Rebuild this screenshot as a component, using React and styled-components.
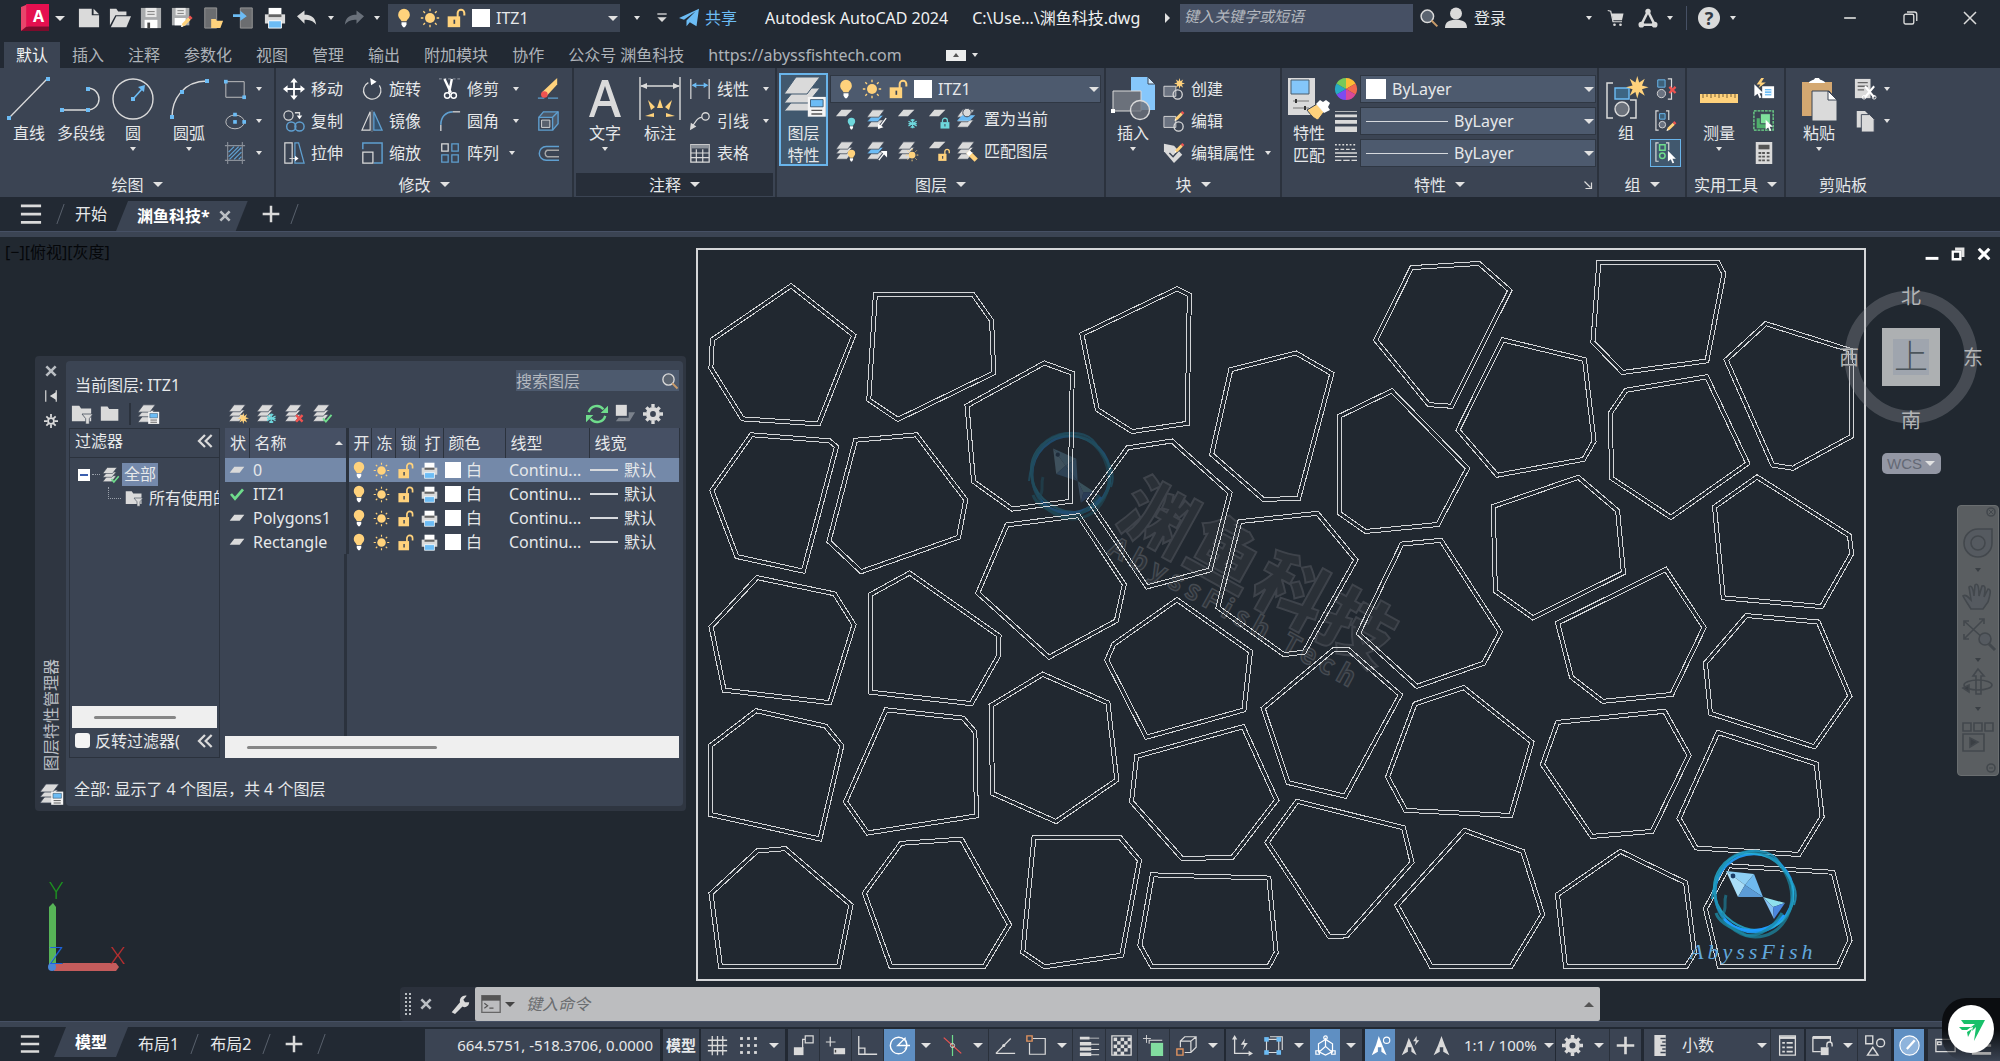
import { useState } from 'react';
import styled, { createGlobalStyle, css } from 'styled-components';

const GlobalStyle = createGlobalStyle`
  * {
    box-sizing: border-box;
  }
  body {
    margin: 0;
    background: #222933;
    color: #e6e8ea;
    font-family: "Noto Sans", "Noto Sans CJK SC", sans-serif;
    font-size: 16px;
    line-height: 24px;
    overflow: hidden;
  }
  button, input, select {
    font: inherit;
    color: inherit;
    border: 0;
    margin: 0;
    padding: 0;
    background: none;
  }
  button {
    cursor: pointer;
  }
  svg {
    display: block;
    flex: none;
    overflow: visible;
  }
`

const L = '#dadada';
const B = '#6cbcf5';
const S = '#5f9fd0';
const Y = '#ffd27c';
const G = '#6fdc8c';
const C = '#6ed7dc';
const R = '#ef5350';
const P = '#3b4453';

/* ---------- icons ---------- */

const Sheets = ({ under = L }) => (
  <g stroke={P} strokeWidth="0.8">
    <path d="M7 13h12l-6 8H1z" fill={L} />
    <path d="M7 8h12l-6 7H1z" fill={under} />
    <path d="M7 2h13l-6 8H1z" fill={L} />
  </g>
)
const Sheet = () => <path d="M7 2h12l-7 7H1z" fill={L} />
const BulbShape = ({ fill = Y }) => (
  <g>
    <path d="M12 1a7 7 0 0 1 7 7c0 4-3 5-4 8H9c-1-3-4-4-4-8a7 7 0 0 1 7-7z" fill={fill} />
    <path d="M9 17h6v3l-2 3h-2l-2-3z" fill="#fff" />
  </g>
)
const SunShape = () => (
  <g>
    <circle cx="12" cy="12" r="6" fill={Y} />
    <path d="M12 1v3M12 20v3M1 12h3M20 12h3M4 4l2 2M18 18l2 2M20 4l-2 2M4 20l2-2" stroke={Y} strokeWidth="1.6" />
  </g>
)
const LockShape = ({ fill = Y }) => (
  <g>
    <path d="M14 11V6a4 4 0 0 1 8 0v3" fill="none" stroke={fill} strokeWidth="2.4" />
    <path d="M2 10h15v13H2z" fill={fill} />
    <path d="M9 14h2v5H9z" fill={P} />
  </g>
)
const ShutLock = () => (
  <g>
    <path d="M7 11V7a5 5 0 0 1 10 0v4" fill="none" stroke={C} strokeWidth="2.6" />
    <path d="M3 10h18v13H3z" fill={C} />
    <path d="M11 14h2v5h-2z" fill={P} />
  </g>
)
const Flake = () => <path d="M12 2v20M3 7l18 10M21 7L3 17M8 3l4 4 4-4M8 21l4-4 4 4M3 12h18" fill="none" stroke={C} strokeWidth="2.6" />
const Pencil = () => (
  <g>
    <path d="M3 21l2-6L15 5l4 4L9 19z" fill={Y} />
    <path d="M15 5l3-3 4 4-3 3z" fill={R} />
    <path d="M3 21l1-4 3 3z" fill="#fff" />
  </g>
)
const Burst = () => <path d="M12 0l2 7 6-4-3 7 7 2-7 2 3 7-6-4-2 7-2-7-6 4 3-7-7-2 7-2-3-7 6 4z" fill={Y} />
const Cursor = () => <path d="M5 1v19l5-4 3 7 3-1-3-7h6z" fill="#fff" />
const Cross = ({ c = R }) => <path d="M4 4l16 16M20 4L4 20" stroke={c} strokeWidth="6" />
const Tick = () => <path d="M3 12l6 7L21 5" fill="none" stroke={G} strokeWidth="4" />
const Card = () => (
  <g>
    <path d="M2 1h20v22H2z" fill="#f4f4f4" />
    <path d="M5 4h14v8H5z" fill={B} stroke="#3b5870" />
    <path d="M6 16h12M6 20h12" stroke="#555" strokeWidth="1.6" />
  </g>
)
const Mini = ({ x = 12, y = 12, s = 0.5, children }) => <g transform={`translate(${x} ${y}) scale(${s})`}>{children}</g>
const Folder = () => <path d="M1 3h8l2 3h11v14H1z" fill={L} />
const Dots = ({ pts, c = B, r = 2 }) => pts.map(([x, y]) => <rect key={`${x}-${y}`} x={x - r} y={y - r} width={r * 2} height={r * 2} fill={c} />)

const ICONS = {
  app: <><path d="M0 3l7-3v24l-7 2z" fill="#e8456b" /><path d="M5 0h22v22H5z" fill="#e51050" /><path d="M0 26l5-4h22v4z" fill="#7d0b2c" /></>,
  newDoc: <><path d="M1 2h14v7h8v13H1z" fill={L} /><path d="M17 2l6 6h-6z" fill={L} /></>,
  open: <><path d="M1 20V2h7l2 3h9v4H7z" fill={L} /><path d="M8 10h16l-5 12H2z" fill={L} /></>,
  save: <><path d="M1 1h22v22H1z" fill="#a9abad" /><path d="M6 1h12v10H6z" fill="#e8e8e8" /><path d="M8 5h8M8 8h8" stroke="#777" /><path d="M5 14h14v9H5z" fill="#fff" /><path d="M8 17h3v6H8z" fill="#444" /></>,
  saveAs: <><path d="M1 1h19v19H1z" fill="#a9abad" /><path d="M5 1h11v8H5z" fill="#e8e8e8" /><path d="M7 4h7M7 7h7" stroke="#777" /><path d="M4 12h12v8H4z" fill="#fff" /><Mini x={9} y={8} s={0.66}><Pencil /></Mini></>,
  phoneOpen: <><path d="M3 1h13v22H3z" fill="#6b6d70" stroke="#999" /><path d="M10 13h5l1 2h7l-3 8H10z" fill={Y} /></>,
  phoneSend: <><path d="M8 1h13v22H8z" fill="#6b6d70" stroke="#999" /><path d="M0 8h8V4l7 6-7 5v-4H0z" fill={B} /></>,
  print: <><path d="M5 1h14v8H5z" fill="#fff" /><path d="M1 8h22v10H1z" fill={L} /><path d="M5 8h14v3H5z" fill="#666" /><path d="M5 15h14v8H5z" fill={B} stroke="#fff" /></>,
  undo: <path d="M0 10l9-7v5c8 0 13 3 14 12-4-5-8-6-14-6v5z" fill={L} />,
  redo: <path d="M24 10l-9-7v5C7 8 2 11 1 20c4-5 8-6 14-6v5z" fill="#69707a" />,
  bulb: <BulbShape />,
  sun: <SunShape />,
  lock: <LockShape />,
  customize: <><path d="M5 6h14" stroke={L} strokeWidth="2" /><path d="M5 11h14l-7 7z" fill={L} /></>,
  plane: <><path d="M0 12L24 1l-3 21-8-5-4 5v-7L20 4 6 14z" fill={B} /></>,
  search: <><circle cx="10" cy="10" r="7.5" fill="#5b6470" stroke={L} strokeWidth="1.8" /><path d="M15 15l7 7" stroke="#c99b6a" strokeWidth="2.4" /></>,
  user: <><circle cx="12" cy="7" r="6.5" fill={L} /><path d="M0 23c0-7 5-9 12-9s12 2 12 9z" fill={L} /></>,
  cart: <><path d="M1 2l4 1 3 14h12" fill="none" stroke={L} strokeWidth="1.6" /><path d="M6 6h16l-2 9H8z" fill={L} /><circle cx="10" cy="21" r="1.8" fill={L} /><circle cx="18" cy="21" r="1.8" fill={L} /></>,
  tri: <><path d="M12 4L4 20h16z" fill="none" stroke={L} strokeWidth="3" /><circle cx="12" cy="4" r="3.2" fill={L} /><circle cx="4" cy="20" r="3.4" fill={L} /><circle cx="20" cy="20" r="3.4" fill={L} /></>,
  minimize: <path d="M5 12h14" stroke={L} strokeWidth="2" />,
  restore: <g fill="none" stroke={L} strokeWidth="1.8"><rect x="4" y="7" width="13" height="13" rx="2" /><path d="M8 4h10a3 3 0 0 1 3 3v9" /></g>,
  close: <path d="M4 4l16 16M20 4L4 20" stroke={L} strokeWidth="2" />,
  childMin: <path d="M1 17h22v5H1z" fill="#fff" />,
  childRestore: <><path d="M7 1h16v16h-5V6H7z" fill="#e4e4e4" /><path d="M3 8h13v13H3z" fill="none" stroke="#fff" strokeWidth="4" /></>,
  childClose: <path d="M3 3l18 18M21 3L3 21" stroke="#fff" strokeWidth="5.4" />,
  menu: <path d="M1 3h22M1 12h22M1 21h22" stroke={L} strokeWidth="3" />,
  plus: <path d="M12 2v20M2 12h20" stroke={L} strokeWidth="3" />,
  x: <path d="M4 4l16 16M20 4L4 20" stroke="#b9bdc2" strokeWidth="4.4" />,

  rect: <><path d="M2 4h20v17H2z" fill="none" stroke="#c8c8c8" /><Dots pts={[[2, 4], [22, 21]]} /></>,
  ellipse: <><ellipse cx="12" cy="13" rx="10" ry="7.5" fill="none" stroke="#c8c8c8" /><Dots pts={[[12, 5], [12, 13], [22, 13]]} /></>,
  hatch: <><path d="M1 4h22M1 20h22M4 0v24M20 0v24" stroke="#8a9099" strokeWidth="1.2" /><path d="M5 11l6-6M5 16L16 5M6 19L19 6M11 19l8-8M16 19l3-3" stroke={S} strokeWidth="1.4" /></>,
  move: <path d="M12 0l4 5h-3v6h6V8l5 4-5 4v-3h-6v6h3l-4 5-4-5h3v-6H5v3l-5-4 5-4v3h6V5H8z" fill="#fff" />,
  rotate: <><path d="M8 5a9.5 9.5 0 1 0 12 3" fill="none" stroke={L} strokeWidth="1.4" /><path d="M10 0l7 4-6 4z" fill="#fff" /></>,
  trim: <><path d="M0 1h24" stroke="#9aa2ac" strokeDasharray="3 2" /><path d="M6 1l7 15M14 1l-3 15" stroke="#fff" strokeWidth="2.6" /><circle cx="9" cy="19" r="3" fill="none" stroke="#fff" strokeWidth="1.6" /><circle cx="16" cy="19" r="3" fill="none" stroke="#fff" strokeWidth="1.6" /></>,
  erase: <><path d="M1 22h7M12 22h11" stroke={S} strokeWidth="1.4" /><path d="M22 0v7L11 19l-5-4z" fill={Y} /><circle cx="8" cy="18" r="3.6" fill={R} /></>,
  copy: <><circle cx="6" cy="6" r="5" fill="none" stroke={L} strokeWidth="1.3" /><g fill="none" stroke={S} strokeWidth="1.6"><circle cx="9" cy="18" r="5" /><circle cx="18" cy="18" r="5" /></g><path d="M13 3h5v3" fill="none" stroke={L} strokeWidth="1.4" /><path d="M15 6h6l-3 4z" fill="#fff" /></>,
  mirror: <><path d="M10 2v20H1z" fill="none" stroke={L} strokeWidth="1.2" /><path d="M14 2v20h9z" fill="#34536f" stroke={S} strokeWidth="1.4" /><path d="M12 0v24" stroke="#8b929b" strokeWidth="0.8" /></>,
  fillet: <><path d="M2 23V16" stroke={L} strokeWidth="1.4" /><path d="M2 16C2 8 7 2 15 2" fill="none" stroke={S} strokeWidth="1.8" /><path d="M15 2h8" stroke={L} strokeWidth="1.4" /></>,
  box3d: <><path d="M2 8l5-6h16v13l-6 7" fill="#4c5868" stroke={S} strokeWidth="1.5" /><path d="M2 8h15v14H2zM17 8l6-6" fill={P} stroke={S} strokeWidth="1.5" /><path d="M5 11h9v8H5z" fill="#59616d" stroke={L} /></>,
  stretch: <><path d="M2 1h8v22H2z" fill="none" stroke={L} strokeWidth="1.3" /><path d="M13 1h4l6 22H13z" fill="none" stroke={S} strokeWidth="1.4" /><path d="M7 18h8" stroke={L} /><path d="M13 15l4 3-4 3z" fill="#fff" /></>,
  scale: <><path d="M2 8V1h21v22h-9" fill="none" stroke={S} strokeWidth="1.6" /><path d="M2 11h11v12H2z" fill="none" stroke={L} strokeWidth="1.4" /></>,
  array: <g fill="none" strokeWidth="1.4"><path d="M3 2h7v8H3z" stroke={L} /><path d="M14 2h7v8h-7zM3 14h7v8H3zM14 14h7v8h-7z" stroke={S} /></g>,
  offset: <g fill="none" strokeWidth="1.6"><path d="M24 5H10a7 7 0 0 0 0 15h14" stroke={S} /><path d="M24 9H11a4 4 0 0 0 0 7h13" stroke="#a6a6a6" /></g>,
  linear: <><path d="M2 1v22M22 1v22" stroke={L} strokeWidth="1.3" /><path d="M4 8h16" stroke={B} strokeWidth="1.3" /><path d="M3 8l5-3v6zM21 8l-5-3v6z" fill={B} /></>,
  leader: <><circle cx="18" cy="7" r="4" fill="none" stroke={L} strokeWidth="1.4" /><path d="M14 8c-6 0-6 5-10 9" fill="none" stroke={L} strokeWidth="1.4" /><path d="M1 22l1-8 6 4z" fill={L} /></>,
  table: <><path d="M2 3h20v19H2z" fill="none" stroke={L} strokeWidth="1.4" /><path d="M2 3h20v4H2z" fill="#8c929a" /><path d="M2 12h20M2 17h20M8 8v14M15 8v14" stroke={L} strokeWidth="1.3" /></>,
  layOff: <><Sheet /><Mini x={11} y={10} s={0.58}><BulbShape fill={C} /></Mini></>,
  layIso: <><Sheets under={B} /><path d="M22 11l-8 11" stroke="#fff" strokeWidth="1.4" /><path d="M13 17v6l6-2z" fill="#fff" /></>,
  layFrz: <><Sheet /><Mini x={11} y={11} s={0.5}><Flake /></Mini></>,
  layLck: <><Sheet /><Mini x={12} y={10} s={0.54}><ShutLock /></Mini></>,
  layCur: <><Sheets /><path d="M7 8h14l-6 6H1z" fill={B} /><circle cx="12" cy="5" r="4.6" fill={L} stroke={P} /></>,
  layOn: <><Sheets /><Mini x={11} y={10} s={0.58}><BulbShape /></Mini></>,
  layUniso: <><Sheets under={B} /><path d="M14 22l7-9" stroke="#fff" strokeWidth="1.4" /><path d="M16 12h7v7z" fill="#fff" /></>,
  layThw: <><Sheets /><Mini x={9} y={9} s={0.62}><SunShape /></Mini></>,
  layUlk: <><Sheet /><Mini x={10} y={9} s={0.6}><LockShape /></Mini></>,
  layMatch: <><Sheets /><path d="M13 13l9 9" stroke={Y} strokeWidth="5" /><path d="M13 13l3 3" stroke="#fff" strokeWidth="5" /></>,
  layNew: <><Sheets /><Mini x={11} y={11} s={0.54}><Burst /></Mini></>,
  layVp: <><Sheets /><Mini x={11} y={11} s={0.54}><Flake /></Mini></>,
  layDel: <><Sheets /><Mini x={12} y={12} s={0.46}><Cross /></Mini></>,
  laySet: <><Sheets /><Mini x={11} y={11} s={0.54}><Tick /></Mini></>,
  layState: <><Sheets /><Mini x={11} y={9} s={0.6}><Card /></Mini></>,

  blkNew: <><path d="M1 9h13v11H1z" fill="#6a7280" stroke={L} /><circle cx="16" cy="18" r="5" fill="none" stroke={L} strokeWidth="1.4" /><Mini x={12} y={0} s={0.5}><Burst /></Mini></>,
  blkEdit: <><path d="M1 7h13v12H1z" fill="#6a7280" stroke={L} /><circle cx="17" cy="18" r="5" fill="none" stroke={L} strokeWidth="1.4" /><Mini x={11} y={0} s={0.56}><Pencil /></Mini></>,
  blkAttr: <><path d="M1 2l11 2 9 10-9 9L1 10z" fill={L} /><path d="M7 12l4 4 8-9" fill="none" stroke={P} strokeWidth="1.6" /><Mini x={11} y={0} s={0.56}><Pencil /></Mini></>,
  wheel: <><path d="M12 12V0A12 12 0 0 1 22.4 6z" fill="#fdbd35" /><path d="M12 12L22.4 6A12 12 0 0 1 22.4 18z" fill="#f2694e" /><path d="M12 12L22.4 18A12 12 0 0 1 12 24z" fill="#d9489a" /><path d="M12 12V24A12 12 0 0 1 1.6 18z" fill="#7d4bf0" /><path d="M12 12L1.6 18A12 12 0 0 1 1.6 6z" fill="#27aac4" /><path d="M12 12L1.6 6A12 12 0 0 1 12 0z" fill="#76c95a" /></>,
  weights: <path d="M0 1h24v1H0zM0 5h24v3H0zM0 11h24v4H0zM0 18h24v6H0z" fill={L} />,
  types: <g stroke={L} strokeWidth="1.5"><path d="M0 3h24" strokeDasharray="2 2" /><path d="M0 8h24" strokeDasharray="4 2" /><path d="M0 12h24M0 16h24" /><path d="M0 20h24" strokeDasharray="7 2" /></g>,
  ungroup: <><path d="M3 2h8v8H3z" fill="#3d6079" stroke={B} /><circle cx="7" cy="17" r="4.5" fill="#6a7280" stroke={L} /><path d="M14 1h4v22h-4" fill="none" stroke={L} strokeWidth="1.3" /><Mini x={14} y={8} s={0.42}><Cross /></Mini></>,
  groupEdit: <><path d="M4 1H1v21h3M12 1h3v10" fill="none" stroke={L} strokeWidth="1.3" /><path d="M5 4h6v6H5z" fill="#3d6079" stroke={B} /><circle cx="8" cy="16" r="3.6" fill="#6a7280" stroke={L} /><Mini x={11} y={11} s={0.56}><Pencil /></Mini></>,
  groupSel: <><path d="M4 1H1v20h3M12 1h3v8" fill="none" stroke={L} strokeWidth="1.3" /><path d="M5 3h6v6H5z" fill="none" stroke={G} strokeWidth="1.6" /><circle cx="8" cy="15" r="3" fill="none" stroke={G} strokeWidth="1.6" /><Mini x={11} y={9} s={0.62}><Cursor /></Mini></>,
  quickSel: <><path d="M10 9h13v13H10z" fill="#fff" /><path d="M13 12h7v7h-7z" fill={B} /><path d="M13 14h7M13 17h7" stroke="#fff" /><path d="M9 0L4 7h4l-2 4 8-6H9l3-5z" fill={Y} /><Mini x={-2} y={6} s={0.7}><Cursor /></Mini></>,
  selectAll: <><path d="M1 1h21v21H1z" fill="none" stroke={G} strokeDasharray="3 1" strokeWidth="1.4" /><path d="M4 9h11v11H4z" fill="#4fae6c" /><path d="M8 4h11v11H8z" fill="#7fe09c" stroke={P} /><Mini x={11} y={10} s={0.56}><Cursor /></Mini></>,
  calc: <><path d="M3 0h18v24H3z" fill={L} /><path d="M6 3h12v5H6z" fill="#555" /><g fill="#555"><path d="M6 11h3v2H6zM10 11h3v2h-3zM15 11h3v2h-3zM6 15h3v2H6zM10 15h3v2h-3zM15 15h3v2h-3zM6 19h3v2H6zM10 19h3v2h-3zM15 19h3v2h-3z" /></g></>,
  cut: <><path d="M1 1h17v21H1z" fill={L} /><path d="M4 5h11M4 9h11M4 13h7" stroke="#666" strokeWidth="1.4" /><path d="M12 9l10 12M22 9L12 21" stroke="#fff" strokeWidth="2.2" /><circle cx="11" cy="21" r="2" fill="none" stroke="#fff" /><circle cx="22" cy="21" r="2" fill="none" stroke="#fff" /></>,
  copyClip: <><path d="M3 1h9l3 3v15H3z" fill={L} /><path d="M8 5h9l5 5v14H8z" fill={L} stroke={P} /></>,
  corner: <><path d="M5 5l12 12" stroke={L} strokeWidth="2.4" /><path d="M19 7v12H7" fill="none" stroke={L} strokeWidth="2.4" /></>,

  folderFilter: <><Folder /><path d="M12 12h12l-4 5v6h-4v-6z" fill={L} stroke={P} strokeWidth="0.8" /></>,
  folder: <Folder />,
  refresh: <><path d="M3 10a9 9 0 0 1 16-3M21 14a9 9 0 0 1-16 3" fill="none" stroke={G} strokeWidth="2.6" /><path d="M24 3v8h-8zM0 21v-8h8z" fill={G} /></>,
  override: <><path d="M2 2h12v12H2z" fill={L} /><path d="M16 10h7l-6 10H2l3-4h11z" fill="#7b828c" /></>,
  gear: <><circle cx="12" cy="12" r="6" fill="none" stroke={L} strokeWidth="5" /><path d="M12 0v4M12 20v4M0 12h4M20 12h4M4 4l3 3M17 17l3 3M20 4l-3 3M4 20l3-3" stroke={L} strokeWidth="4" /></>,
  pin: <><path d="M3 2v20M21 2v20" stroke={L} strokeWidth="2" /><path d="M21 5v14l-11-7z" fill={L} /></>,
  sunGear: <><circle cx="12" cy="12" r="5" fill="none" stroke={L} strokeWidth="3" /><path d="M12 0v6M12 18v6M0 12h6M18 12h6M4 4l4 4M16 16l4 4M20 4l-4 4M4 20l4-4" stroke={L} strokeWidth="3" /></>,
  chevrons: <path d="M12 3l-9 9 9 9M22 3l-9 9 9 9" fill="none" stroke={L} strokeWidth="3.4" />,
  tick: <Tick />,
  sheetRow: <path d="M8 7h15l-7 9H1z" fill={L} />,

  wrench: <path d="M2 22l10-12c-1-5 3-9 8-8l-4 5 2 3h5c0 5-5 7-8 5L6 24z" fill={L} />,
  terminal: <><path d="M1 2h22v20H1z" fill="none" stroke="#666" strokeWidth="1.6" /><path d="M1 2h22v6H1z" fill="#555" /><path d="M4 11l4 3-4 3M10 17h5" fill="none" stroke="#555" strokeWidth="1.4" /></>,
  grid: <path d="M6 1v22M12 1v22M18 1v22M1 6h22M1 12h22M1 18h22" stroke={L} strokeWidth="1.5" />,
  snap: <Dots c={L} r={1.6} pts={[[4, 4], [12, 4], [20, 4], [4, 12], [12, 12], [20, 12], [4, 20], [12, 20], [20, 20]]} />,
  infer: <><path d="M1 14h11v9H1z" fill={L} /><path d="M14 1h9v8h-9zM14 5h-3v10" fill="none" stroke={L} strokeWidth="1.4" /></>,
  dyn: <><path d="M6 2v11M1 8h11" stroke={L} strokeWidth="1.4" /><path d="M10 15h13v7H10z" fill={L} /><path d="M12 17v3" stroke="#444" strokeWidth="1.6" /></>,
  ortho: <path d="M2 1v21h21M2 15h7v7" fill="none" stroke={L} strokeWidth="1.5" />,
  polar: <><circle cx="11" cy="12" r="9.5" fill="none" stroke="#fff" strokeWidth="1.6" /><path d="M24 12H10l9-9" fill="none" stroke="#fff" strokeWidth="1.6" /><path d="M18 4c3 4 3 8 0 12" fill="none" stroke="#fff" /></>,
  iso: <><path d="M12 0v24" stroke={G} strokeWidth="1.4" /><path d="M2 3l20 18" stroke={R} strokeWidth="1.4" /><circle cx="12" cy="12" r="2.4" fill="none" stroke={L} /></>,
  otrack: <><path d="M1 21h22M1 21L18 4" fill="none" stroke={L} strokeWidth="1.5" /><circle cx="10" cy="12" r="1.8" fill={L} /></>,
  osnap: <><path d="M8 4h14v18H4V9" fill="none" stroke={L} strokeWidth="1.4" /><path d="M1 1h6v6H1z" fill="none" stroke="#e0935f" strokeWidth="1.6" /></>,
  lweight: <path d="M1 2h11v3H1zM1 8h13v4H1zM1 14h13v4H1zM1 20h13v4H1zM12 3h11v1H12zM14 10h9v1h-9zM14 16h9v1h-9zM14 22h9v1h-9z" fill={L} />,
  transp: <><path d="M1 1h22v22H1z" fill="none" stroke={L} strokeWidth="1.5" /><Dots c={L} r={2} pts={[[5, 5], [13, 5], [9, 9], [17, 9], [5, 13], [13, 13], [9, 17], [17, 17], [21, 5], [21, 13], [5, 21], [13, 21]]} /></>,
  cycling: <><path d="M4 0v9M0 4h9" stroke={L} /><path d="M7 10V6h15" fill="none" stroke={L} strokeWidth="1.2" /><path d="M9 9h14v15H9z" fill="#82dda0" /></>,
  snap3d: <><path d="M5 14V7l5-5h13v12l-6 6h-7M5 7h12v12M17 7l6-5" fill="none" stroke={L} strokeWidth="1.4" /><path d="M1 16h7v7H1z" fill={P} stroke="#e0935f" strokeWidth="1.6" /></>,
  ucs: <><path d="M3 3v18h18" fill="none" stroke={L} strokeWidth="1.5" /><path d="M3 0l3 5H0zM24 21l-5-3v6z" fill={L} /><path d="M15 4l-5 7h4l-2 6 6-8h-4z" fill={L} /></>,
  filter3d: <><path d="M4 5h14v15H4zM8 2h14v15" fill="none" stroke={L} strokeWidth="1.3" /><Dots r={2.6} pts={[[4, 5], [18, 5], [4, 20], [18, 20]]} /></>,
  gizmo: <g fill="none" stroke="#fff" strokeWidth="1.4"><path d="M12 5l8 5v9l-8 4-8-4v-9z" /><path d="M12 3v10l-8 7M12 13l8 7" /><circle cx="12" cy="3" r="2" /><path d="M1 18h4v4H1zM19 18h4v4h-4z" /></g>,
  annVis: <><path d="M10 1l4 10 5 12-6-4v-5H9v5l-7 4L7 11z" fill="#fff" /><circle cx="19" cy="6" r="3.6" fill="none" stroke="#fff" strokeWidth="1.3" /></>,
  annAuto: <><path d="M10 3l4 9 5 11-6-4v-5H9v5l-7 4L7 12z" fill={L} /><path d="M19 1l-4 6h3l-1 5 5-6h-3z" fill={L} /></>,
  ann: <path d="M12 1l4 11 5 11-7-4v-5h-4v5l-7 4L8 12z" fill={L} />,
  ruler: <><path d="M5 0h13v24H5z" fill={L} /><path d="M12 4h6M14 8h4M12 12h6M14 16h4M12 20h6" stroke={P} strokeWidth="1.8" /></>,
  qprops: <><path d="M3 1h18v22H3z" fill="none" stroke={L} strokeWidth="1.5" /><path d="M3 3h18" stroke={L} strokeWidth="3" /><path d="M6 9h3M6 14h3M6 19h3M11 9h7M11 14h7M11 19h7" stroke={L} strokeWidth="2" /></>,
  lockUi: <><path d="M1 2h20v7M1 2v17h9" fill="none" stroke={L} strokeWidth="1.5" /><path d="M1 3h20" stroke={L} strokeWidth="3" /><path d="M10 14h9v9h-9z" fill={L} /><path d="M17 14v-3a3 3 0 0 1 6 0v2" fill="none" stroke={L} strokeWidth="1.6" /></>,
  isolate: <g fill="none" stroke={L} strokeWidth="1.6"><path d="M2 1h8v9H2zM10 14l6 9H4z" /><circle cx="19" cy="9" r="4.5" /></g>,
  clean: <><circle cx="12" cy="12" r="11" fill="#8fb4dc" stroke="#fff" strokeWidth="1.3" /><path d="M9 16L18 6" stroke="#fff" strokeWidth="2.6" /></>,
  monitor: <path d="M1 5h22v14H1zM3 8h4v3H3z" fill="none" stroke={L} strokeWidth="1.5" />,
}

const BIG = {
  line: <><path d="M1 43L41 2" stroke={L} strokeWidth="1.3" /><Dots pts={[[2, 42], [41, 3]]} /></>,
  pline: <><path d="M2 34h26c16 0 16-22 0-22" fill="none" stroke={L} strokeWidth="1.4" /><Dots pts={[[3, 34], [29, 34], [29, 13]]} /></>,
  circle: <><circle cx="22" cy="23" r="20" fill="none" stroke={L} strokeWidth="1.4" /><path d="M22 23l9-10" stroke={B} strokeWidth="1.6" /><path d="M34 9l-1 7-6-5z" fill={B} /><Dots pts={[[22, 23]]} /></>,
  arc: <><path d="M5 41C5 24 16 5 40 5" fill="none" stroke={L} strokeWidth="1.4" /><Dots pts={[[5, 41], [15, 16], [40, 5]]} /></>,
  text: <path d="M6 41L19 4h6l13 37h-6l-4-11H15l-4 11zM17 25h10l-5-15z" fill={L} fillRule="evenodd" />,
  dim: <><path d="M2 1v43M42 1v43M3 10h38" stroke={L} strokeWidth="1.4" /><path d="M2 10l7-3v6zM42 10l-7-3v6z" fill={L} /><path d="M22 23l3 9h-6zM10 24l7 7-4 3zM34 24l-7 7 4 3zM7 40l9-3v4zM37 40l-9-3v4z" fill={Y} /></>,
  layprop: <><path d="M14 21h24L26 35H2z" fill={L} stroke="#41586e" /><path d="M14 12h24L26 27H2z" fill={L} stroke="#41586e" /><path d="M14 1h24L25 18H2z" fill={L} stroke="#41586e" /><Mini x={24} y={20} s={0.9}><Card /></Mini></>,
  insert: <><path d="M20 1h17l7 7v26H20z" fill="#86c7fb" /><path d="M37 1l7 7h-7z" fill="#d4ebfd" stroke={P} /><path d="M2 15h28v20H2z" fill="#6b717b" stroke={L} /><circle cx="29" cy="34" r="9.5" fill="#6b717b" fillOpacity=".8" stroke={L} strokeWidth="1.4" /><Dots c="#fff" pts={[[2, 35]]} /></>,
  match: <><path d="M1 2h27v37H1z" fill={L} /><path d="M4 4h18v14H4z" fill="#84c6fa" stroke="#4b5c6c" /><path d="M6 25h16M6 32h16" stroke="#777" /><path d="M9 23v4M18 30v4" stroke="#333" strokeWidth="2" /><path d="M20 34l10-6 7 8-6 8c-4-1-8-6-11-10z" fill={Y} stroke={P} /><path d="M29 28l4-4 3 2 3-2 4 3-2 4 2 3-6 3z" fill="#fff" /></>,
  group: <><path d="M9 7H3v35h6M26 24h6v18h-6" fill="none" stroke={L} strokeWidth="1.5" /><path d="M11 12h14v11H11z" fill="#3d6583" stroke={B} strokeWidth="1.4" /><circle cx="18" cy="33" r="7" fill="#6b717b" stroke={L} strokeWidth="1.4" /><Mini x={22} y={0} s={0.94}><Burst /></Mini></>,
  measure: <><path d="M3 18h38v9H3z" fill={Y} /><path d="M6 18v4M10 18v3M14 18v4M18 18v3M22 18v4M26 18v3M30 18v4M34 18v3M38 18v4" stroke="#7b6133" /></>,
  paste: <><path d="M5 6h30v34H5z" fill="#d4a871" /><path d="M12 7c0-3 5-2 6-5h4c1 3 6 2 6 5z" fill="#fff" /><path d="M15 15h17l8 9v21H15z" fill={L} stroke={P} /><path d="M31 15l9 9h-9z" fill="#fff" stroke={P} /></>,
}

const Icon = ({ name, size = 24 }) => (
  <svg width={size} height={size} viewBox={name === 'app' ? '0 0 27 27' : '0 0 24 24'} aria-hidden="true">{ICONS[name]}</svg>
)
const BigIcon = ({ name }) => <svg width="44" height="44" viewBox="0 0 44 44" aria-hidden="true">{BIG[name]}</svg>

/* ---------- shared bits ---------- */

const Caret = styled.span`
  flex: none;
  width: 0;
  height: 0;
  border: solid transparent;
  border-width: ${({ $big }) => ($big ? '5px' : '4px')} ${({ $big }) => ($big ? '5px' : '3px')} 0;
  border-top-color: ${({ $dark }) => ($dark ? '#444' : '#e2e2e2')};
`
const Cell = styled.button`
  flex: none;
  width: ${({ $w }) => $w}px;
  height: 28px;
  display: flex;
  align-items: center;
  justify-content: center;
`
const Slash = styled.span`
  flex: none;
  width: 1px;
  height: 20px;
  background: #59616d;
  transform: skewX(-20deg);
`
const Combo = styled.label`
  height: 28px;
  display: flex;
  align-items: center;
  gap: 6px;
  padding: 0 1px 0 5px;
  background: ${({ $flat }) => ($flat ? P : '#4d5a6e')};
  border: 1px solid ${({ $flat }) => ($flat ? P : '#2f3743')};
  width: ${({ $w }) => $w}px;
`
const ComboSelect = styled.select`
  flex: 1;
  min-width: 0;
  appearance: none;
  outline: none;
  height: 24px;
`
const Swatch = styled.span`
  flex: none;
  width: ${({ $s }) => $s || 18}px;
  height: ${({ $s }) => $s || 18}px;
  background: #fff;
`
const LineSample = styled.span`
  flex: none;
  width: ${({ $w }) => $w}px;
  height: ${({ $thin }) => ($thin ? 1 : 2)}px;
  background: #d6d9dd;
`

/* ---------- title bar ---------- */

const Shell = styled.div`
  height: 100vh;
  display: flex;
  flex-direction: column;
`
const TitleBar = styled.header`
  height: 36px;
  flex: none;
  display: flex;
  align-items: center;
  padding-left: 18px;
  white-space: nowrap;
`
const AppButton = styled.button`
  position: relative;
  width: 34px;
  height: 28px;
  display: flex;
  align-items: center;
  justify-content: center;
`
const AppLetter = styled.span`
  position: absolute;
  left: 7px;
  right: 0;
  top: 0;
  font-weight: 700;
  color: #fff;
`
const Quick = styled.div`
  display: flex;
  margin: 0 4px 0 5px;
`
const Share = styled.button`
  display: flex;
  align-items: center;
  gap: 6px;
  color: ${B};
  margin: 0 28px 0 9px;
`
const DocTitle = styled.h1`
  margin: 0;
  font-size: 16px;
  font-weight: 400;
  color: #f0f1f2;
  display: flex;
  gap: 24px;
`
const Play = styled.span`
  border: solid transparent;
  border-width: 5px 0 5px 5px;
  border-left-color: #e2e2e2;
  margin: 0 10px 0 auto;
`
const TitleText = styled.div`
  width: 415px;
  display: flex;
  align-items: center;
`
const SearchInput = styled.input`
  width: 233px;
  height: 28px;
  background: #465064;
  padding: 0 4px 4px;
  outline: none;
  font-size: 15px;
  font-style: italic;
  &::placeholder { color: #b4b8bf; }
`
const Login = styled.button`
  display: flex;
  align-items: center;
  gap: 7px;
`
const TitleRight = styled.div`
  margin-left: auto;
  display: flex;
  align-items: center;
`
const Rule = styled.span`
  width: 1px;
  height: 24px;
  margin: 0 5px 0 9px;
  background: #465064;
`
const Help = styled.span`
  width: 22px;
  height: 22px;
  line-height: 22px;
  border-radius: 50%;
  background: ${L};
  color: #333a44;
  font-size: 18px;
  font-weight: 700;
`
const WindowButtons = styled.div`
  display: flex;
  margin-left: 80px;
`

const QUICK = [
  ['newDoc', '新建'], ['open', '打开'], ['save', '保存'], ['saveAs', '另存为'],
  ['phoneOpen', '从 Web 打开'], ['phoneSend', '保存到 Web'], ['print', '打印'],
]

const Title = () => (
  <TitleBar>
    <AppButton aria-label="应用程序菜单"><Icon name="app" size={28} /><AppLetter>A</AppLetter></AppButton>
    <Cell $w={16} aria-label="应用程序"><Caret $big /></Cell>
    <Quick>
      {QUICK.map(([icon, label]) => <Cell key={icon} $w={31} aria-label={label}><Icon name={icon} size={22} /></Cell>)}
      <Cell $w={34} aria-label="放弃"><Icon name="undo" size={20} /></Cell>
      <Cell $w={14} aria-label="放弃列表"><Caret /></Cell>
      <Cell $w={32} aria-label="重做"><Icon name="redo" size={20} /></Cell>
      <Cell $w={14} aria-label="重做列表"><Caret /></Cell>
    </Quick>
    <Combo $flat $w={232}>
      <Icon name="bulb" size={20} /><Icon name="sun" size={20} /><Icon name="lock" size={20} /><Swatch />
      <ComboSelect aria-label="当前图层"><option>ITZ1</option></ComboSelect>
      <Caret $big />
    </Combo>
    <Cell $w={34} aria-label="更多"><Caret /></Cell>
    <Cell $w={16} aria-label="自定义"><Icon name="customize" size={16} /></Cell>
    <Share><Icon name="plane" size={20} />共享</Share>
    <TitleText>
      <DocTitle><span>Autodesk AutoCAD 2024</span><span>C:\Use...\渊鱼科技.dwg</span></DocTitle>
      <Play />
    </TitleText>
    <SearchInput aria-label="搜索" placeholder="键入关键字或短语" />
    <Cell $w={32} aria-label="搜索"><Icon name="search" size={20} /></Cell>
    <Login><Icon name="user" size={22} />登录</Login>
    <TitleRight>
      <Cell $w={20} aria-label="登录列表"><Caret /></Cell>
      <Cell $w={34} aria-label="购物车"><Icon name="cart" size={18} /></Cell>
      <Cell $w={30} aria-label="Autodesk"><Icon name="tri" size={20} /></Cell>
      <Cell $w={14} aria-label="Autodesk 列表"><Caret /></Cell>
      <Rule />
      <Cell $w={34} aria-label="帮助"><Help>?</Help></Cell>
      <Cell $w={14} aria-label="帮助列表"><Caret /></Cell>
      <WindowButtons>
        <Cell $w={60} aria-label="最小化"><Icon name="minimize" size={20} /></Cell>
        <Cell $w={60} aria-label="还原"><Icon name="restore" size={18} /></Cell>
        <Cell $w={60} aria-label="关闭"><Icon name="close" size={18} /></Cell>
      </WindowButtons>
    </TitleRight>
  </TitleBar>
)

/* ---------- ribbon ---------- */

const TabRow = styled.nav`
  flex: none;
  display: flex;
  height: 32px;
  padding: 6px 0 0 4px;
`
const RibbonTab = styled.button`
  padding: 0 12px;
  white-space: nowrap;
  color: ${({ $on }) => ($on ? '#f2f3f4' : '#aeb3b9')};
  background: ${({ $on }) => ($on ? P : 'none')};
`
const PanelToggle = styled.button`
  display: flex;
  align-items: center;
  gap: 6px;
  margin-left: 32px;
`
const ToggleBox = styled.span`
  width: 20px;
  height: 11px;
  background: #eceded;
  display: flex;
  align-items: center;
  justify-content: center;
  &::after {
    content: '';
    border: solid transparent;
    border-width: 0 3px 4px;
    border-bottom-color: #555;
  }
`
const RibbonBar = styled.div`
  flex: none;
  display: flex;
  height: 129px;
  background: ${P};
`
const PanelBox = styled.section`
  flex: none;
  width: ${({ $w }) => $w}px;
  display: flex;
  flex-direction: column;
  border-right: 2px solid ${({ $last }) => ($last ? P : '#2b323d')};
`
const PanelBody = styled.div`
  display: flex;
  height: 105px;
  padding: 5px 0 0 ${({ $pad }) => $pad}px;
`
const PanelTitle = styled.button`
  height: 23px;
  margin: 0 2px;
  display: flex;
  align-items: center;
  justify-content: center;
  gap: 9px;
  background: ${({ $dark }) => ($dark ? '#272e39' : 'none')};
  position: relative;
`
const Launcher = styled.span`
  position: absolute;
  right: 1px;
  top: 6px;
`
const BigTool = styled.button`
  flex: none;
  width: ${({ $w }) => $w}px;
  height: 93px;
  padding-top: 3px;
  display: flex;
  flex-direction: column;
  align-items: center;
  line-height: 22px;
  white-space: pre-line;
  ${({ $on }) => $on && css`
    background: #41586e;
    border: 2px solid #69b4ea;
    padding-top: 1px;
  `}
`
const BigLabel = styled.span`
  padding: 2px 0 3px;
`
const Stack = styled.div`
  display: grid;
  grid-auto-flow: column;
  grid-template-rows: repeat(3, 32px);
  grid-template-columns: ${({ $cols }) => $cols};
  height: 96px;
  margin-left: ${({ $gap }) => $gap || 0}px;
`
const SmallTool = styled.button`
  display: flex;
  align-items: center;
  gap: 6px;
  white-space: nowrap;
  min-width: 0;
  padding-left: 2px;
`
const PickTool = styled.button`
  width: 31px;
  height: 28px;
  margin-top: 2px;
  display: flex;
  align-items: center;
  justify-content: center;
  ${({ $on }) => $on && css`
    background: #41586e;
    border: 1px solid #69b4ea;
  `}
`
const CaretGap = styled.span`
  display: flex;
  margin-left: ${({ $g }) => $g}px;
`
const Column = styled.div`
  display: flex;
  flex-direction: column;
  gap: 4px;
  padding-top: 2px;
`
const IconRow = styled.div`
  display: flex;
  height: 28px;
  align-items: center;
`

const Big = ({ icon, label, w, caret, on }) => (
  <BigTool $w={w} $on={on}>
    <BigIcon name={icon} />
    <BigLabel>{label}</BigLabel>
    {caret && <Caret />}
  </BigTool>
)
const Small = ({ icon, label, caret, gap = 8, hint }) => (
  <SmallTool aria-label={label || hint}>
    <Icon name={icon} size={22} />
    {label}
    {caret && <CaretGap $g={gap}><Caret /></CaretGap>}
  </SmallTool>
)
const Panel = ({ w, pad = 4, title, caret = true, dark, last, launcher, children }) => (
  <PanelBox $w={w} $last={last}>
    <PanelBody $pad={pad}>{children}</PanelBody>
    <PanelTitle $dark={dark}>
      {title}
      {caret && <Caret $big />}
      {launcher && <Launcher><Icon name="corner" size={12} /></Launcher>}
    </PanelTitle>
  </PanelBox>
)

const TABS = ['默认', '插入', '注释', '参数化', '视图', '管理', '输出', '附加模块', '协作', '公众号 渊鱼科技', 'https://abyssfishtech.com']

const Ribbon = () => {
  const [tab, setTab] = useState('默认');

  return (
    <>
      <TabRow>
        {TABS.map((name) => (
          <RibbonTab key={name} $on={tab === name} onClick={() => setTab(name)}>{name}</RibbonTab>
        ))}
        <PanelToggle aria-label="最小化功能区"><ToggleBox /><Caret /></PanelToggle>
      </TabRow>
      <RibbonBar>
        <Panel w={276} pad={2} title="绘图">
          <Big icon="line" label="直线" w={54} />
          <Big icon="pline" label="多段线" w={50} />
          <Big icon="circle" label="圆" w={54} caret />
          <Big icon="arc" label="圆弧" w={58} caret />
          <Stack $cols="48px" $gap={4}>
            <Small icon="rect" hint="矩形" caret gap={4} />
            <Small icon="ellipse" hint="椭圆" caret gap={4} />
            <Small icon="hatch" hint="图案填充" caret gap={4} />
          </Stack>
        </Panel>
        <Panel w={298} pad={5} title="修改">
          <Stack $cols="78px 78px 98px 30px">
            <Small icon="move" label="移动" />
            <Small icon="copy" label="复制" />
            <Small icon="stretch" label="拉伸" />
            <Small icon="rotate" label="旋转" />
            <Small icon="mirror" label="镜像" />
            <Small icon="scale" label="缩放" />
            <Small icon="trim" label="修剪" caret />
            <Small icon="fillet" label="圆角" caret />
            <Small icon="array" label="阵列" caret gap={4} />
            <Small icon="erase" hint="删除" />
            <Small icon="box3d" hint="分解" />
            <Small icon="offset" hint="偏移" />
          </Stack>
        </Panel>
        <Panel w={203} pad={3} title="注释" dark>
          <Big icon="text" label="文字" w={56} caret />
          <Big icon="dim" label="标注" w={54} />
          <Stack $cols="84px">
            <Small icon="linear" label="线性" caret />
            <Small icon="leader" label="引线" caret />
            <Small icon="table" label="表格" />
          </Stack>
        </Panel>
        <Panel w={329} pad={2} title="图层">
          <Big icon="layprop" label={'图层\n特性'} w={49} on />
          <Stack $cols="271px" $gap={2}>
            <Column>
              <Combo $w={271}>
                <Icon name="bulb" size={20} /><Icon name="sun" size={20} /><Icon name="lock" size={20} /><Swatch />
                <ComboSelect aria-label="图层"><option>ITZ1</option></ComboSelect>
                <Caret $big />
              </Combo>
            </Column>
            <IconRow as={IconRow}>
              {['layOff', 'layIso', 'layFrz', 'layLck'].map((n) => <Cell key={n} $w={31} aria-label={n}><Icon name={n} size={22} /></Cell>)}
              <Small icon="layCur" label="置为当前" />
            </IconRow>
            <IconRow>
              {['layOn', 'layUniso', 'layThw', 'layUlk'].map((n) => <Cell key={n} $w={31} aria-label={n}><Icon name={n} size={22} /></Cell>)}
              <Small icon="layMatch" label="匹配图层" />
            </IconRow>
          </Stack>
        </Panel>
        <Panel w={176} pad={2} title="块">
          <Big icon="insert" label="插入" w={50} caret />
          <Stack $cols="112px" $gap={3}>
            <Small icon="blkNew" label="创建" />
            <Small icon="blkEdit" label="编辑" />
            <Small icon="blkAttr" label="编辑属性" caret gap={4} />
          </Stack>
        </Panel>
        <Panel w={317} pad={3} title="特性" launcher>
          <Big icon="match" label={'特性\n匹配'} w={48} />
          <Stack $cols="27px">
            <Small icon="wheel" hint="对象颜色" />
            <Small icon="weights" hint="线宽" />
            <Small icon="types" hint="线型" />
          </Stack>
          <Column>
            <Combo $w={236}>
              <Swatch $s={20} />
              <ComboSelect aria-label="对象颜色"><option>ByLayer</option></ComboSelect>
              <Caret $big />
            </Combo>
            {['线宽', '线型'].map((name) => (
              <Combo key={name} $w={236}>
                <LineSample $w={82} $thin />
                <ComboSelect aria-label={name}><option>ByLayer</option></ComboSelect>
                <Caret $big />
              </Combo>
            ))}
          </Column>
        </Panel>
        <Panel w={88} pad={3} title="组">
          <Big icon="group" label="组" w={48} />
          <Stack $cols="31px">
            <PickTool aria-label="解除编组"><Icon name="ungroup" size={22} /></PickTool>
            <PickTool aria-label="组编辑"><Icon name="groupEdit" size={22} /></PickTool>
            <PickTool aria-label="启用组选择" $on><Icon name="groupSel" size={22} /></PickTool>
          </Stack>
        </Panel>
        <Panel w={99} pad={6} title="实用工具">
          <Big icon="measure" label="测量" w={52} caret />
          <Stack $cols="30px" $gap={6}>
            <Small icon="quickSel" hint="快速选择" />
            <Small icon="selectAll" hint="全部选择" />
            <Small icon="calc" hint="快速计算器" />
          </Stack>
        </Panel>
        <Panel w={116} pad={6} title="剪贴板" caret={false} last>
          <Big icon="paste" label="粘贴" w={54} caret />
          <Stack $cols="46px" $gap={6}>
            <Small icon="cut" hint="剪切" caret gap={2} />
            <Small icon="copyClip" hint="复制" caret gap={2} />
          </Stack>
        </Panel>
      </RibbonBar>
    </>
  )
}

/* ---------- file tabs ---------- */

const TabStrip = styled.nav`
  flex: none;
  height: ${({ $h }) => $h}px;
  display: flex;
  align-items: center;
`
const StripEdge = styled.div`
  flex: none;
  height: 6px;
  background: ${P};
  border-top: 1px solid #465064;
`
const MenuButton = styled.button`
  padding: 0 ${({ $r }) => $r}px 0 20px;
`
const SheetTab = styled.button`
  padding: 0 ${({ $r }) => $r}px 0 ${({ $l }) => $l}px;
  white-space: nowrap;
`
const ActiveTab = styled.div`
  height: 30px;
  align-self: ${({ $top }) => ($top ? 'flex-start' : 'flex-end')};
  padding: 0 ${({ $top }) => ($top ? 21 : 16)}px 0 21px;
  display: flex;
  align-items: center;
  gap: 8px;
  font-weight: 700;
  white-space: nowrap;
  background: ${P};
  color: #fff;
  clip-path: polygon(12px 0, 100% 0, calc(100% - 12px) 100%, 0 100%);
`

/* ---------- layer palette ---------- */

const Palette = styled.aside`
  position: absolute;
  left: 35px;
  top: 119px;
  width: 651px;
  height: 455px;
  display: flex;
  padding: 5px 3px 5px 0;
  background: #2f3641;
  border-radius: 4px;
`
const PaletteSide = styled.div`
  width: 31px;
  display: flex;
  flex-direction: column;
  align-items: center;
  gap: 11px;
  padding: 3px 0 0;
`
const SideTitle = styled.h2`
  margin: auto 0 0;
  font-size: 16px;
  font-weight: 400;
  color: #b9bdc3;
  writing-mode: vertical-rl;
  text-orientation: sideways;
  transform: rotate(180deg);
`
const PaletteMain = styled.div`
  flex: 1;
  min-width: 0;
  display: flex;
  flex-direction: column;
  background: ${P};
  border-radius: 4px;
  padding: 9px 4px 0 3px;
`
const PaletteTop = styled.div`
  display: flex;
  justify-content: space-between;
  height: 29px;
  padding-left: 6px;
`
const CurrentLayer = styled.span`
  padding-top: 3px;
`
const LayerSearch = styled.label`
  width: 163px;
  height: 21px;
  display: flex;
  align-items: center;
  background: #4d5a6e;
`
const LayerSearchInput = styled.input`
  flex: 1;
  min-width: 0;
  height: 21px;
  outline: none;
  &::placeholder { color: #b4b8bf; }
`
const ToolRow = styled.div`
  display: flex;
  align-items: center;
  height: 29px;
`
const ToolRule = styled.span`
  width: 2px;
  height: 22px;
  margin: 0 4px;
  background: #2b323d;
`
const Spacer = styled.span`
  width: ${({ $w }) => $w}px;
  flex: ${({ $w }) => ($w ? 'none' : 1)};
`
const Split = styled.div`
  display: flex;
  gap: 5px;
  height: 330px;
`
const Filters = styled.div`
  width: 151px;
  display: flex;
  flex-direction: column;
  border: 1px solid #2b323d;
`
const FilterHead = styled.div`
  height: 29px;
  display: flex;
  align-items: center;
  justify-content: space-between;
  padding: 0 6px 4px 5px;
  border-bottom: ${({ $line }) => ($line ? '1px solid #2b323d' : '0')};
`
const Tree = styled.div`
  flex: 1;
  overflow: hidden;
  white-space: nowrap;
  padding: 5px 0 0 8px;
`
const TreeRow = styled.div`
  display: flex;
  align-items: center;
  gap: ${({ $in }) => ($in ? 4 : 2)}px;
  height: 23px;
  padding-left: ${({ $in }) => $in || 0}px;
`
const Expander = styled.button`
  flex: none;
  width: 12px;
  height: 12px;
  background: #fff;
  display: flex;
  align-items: center;
  justify-content: center;
  &::after {
    content: '';
    width: 8px;
    height: 2px;
    background: #3c5fae;
  }
`
const Branch = styled.span`
  flex: none;
  width: ${({ $w }) => $w}px;
  height: ${({ $h }) => $h || 1}px;
  margin-bottom: ${({ $h }) => ($h ? $h - 2 : 0)}px;
  border: 0 dotted #9aa1ab;
  border-bottom-width: 1px;
  border-left-width: ${({ $h }) => ($h ? 1 : 0)}px;
`
const Picked = styled.span`
  padding: 0 2px;
  height: 23px;
  line-height: 23px;
  background: #7489ab;
`
const TreeName = styled.span`
  margin-left: 2px;
`
const ScrollTrack = styled.div`
  flex: none;
  height: 22px;
  display: flex;
  align-items: center;
  padding-left: 22px;
  background: #efefef;
  border-left: ${({ $inner }) => ($inner ? `2px solid ${P}` : 0)};
  border-right: ${({ $inner }) => ($inner ? `2px solid ${P}` : 0)};
`
const ScrollThumb = styled.span`
  width: ${({ $w }) => $w}px;
  height: 3px;
  border-radius: 2px;
  background: #868686;
`
const Invert = styled.label`
  display: flex;
  align-items: center;
  gap: 5px;
  white-space: nowrap;
`
const Tickbox = styled.input`
  appearance: none;
  width: 15px;
  height: 15px;
  background: #f4f4f4;
  border-radius: 3px;
`
const TableSide = styled.div`
  flex: 1;
  min-width: 0;
  display: flex;
  flex-direction: column;
`
const TableFill = styled.div`
  flex: 1;
  background: linear-gradient(#2b323d, #2b323d) 119px 0 / 3px 100% no-repeat;
`
const LayerTable = styled.table`
  width: 100%;
  table-layout: fixed;
  border-collapse: collapse;
`
const Th = styled.th`
  width: ${({ $w }) => $w}px;
  height: 30px;
  padding: 0 0 0 5px;
  font-weight: 400;
  text-align: left;
  white-space: nowrap;
  overflow: hidden;
  background: #465064;
  border-right: ${({ $split }) => ($split ? 3 : 1)}px solid #2b323d;
`
const Tr = styled.tr`
  height: 24px;
  background: ${({ $on }) => ($on ? '#7489a9' : 'none')};
`
const Td = styled.td`
  height: 24px;
  padding: 0 0 0 ${({ $pad }) => $pad ?? 4}px;
  line-height: 22px;
  white-space: nowrap;
  border-right: ${({ $split }) => ($split ? '3px solid #2b323d' : 0)};
`
const Inline = styled.span`
  display: flex;
  align-items: center;
  gap: ${({ $g }) => $g || 0}px;
`
const SortMark = styled.span`
  margin: 0 3px 0 auto;
  border: solid transparent;
  border-width: 0 4px 4px;
  border-bottom-color: #e2e2e2;
`
const PaletteFoot = styled.p`
  margin: 19px 0 0 5px;
`

const COLS = [['状', 24], ['名称', 98], ['开', 24], ['冻', 24], ['锁', 24], ['打', 24], ['颜色', 62], ['线型', 84], ['线宽', 90]]
const LAYERS = ['0', 'ITZ1', 'Polygons1', 'Rectangle']

const LayerPalette = () => {
  const [picked, setPicked] = useState('0');

  return (
    <Palette>
      <PaletteSide>
        <button aria-label="关闭"><Icon name="x" size={14} /></button>
        <button aria-label="自动隐藏"><Icon name="pin" size={14} /></button>
        <button aria-label="特性"><Icon name="sunGear" size={14} /></button>
        <SideTitle>图层特性管理器</SideTitle>
        <Icon name="layState" size={24} />
      </PaletteSide>
      <PaletteMain>
        <PaletteTop>
          <CurrentLayer>当前图层: ITZ1</CurrentLayer>
          <LayerSearch>
            <LayerSearchInput aria-label="搜索图层" placeholder="搜索图层" />
            <Icon name="search" size={18} />
          </LayerSearch>
        </PaletteTop>
        <ToolRow>
          <Cell $w={26} aria-label="新建特性过滤器"><Icon name="folderFilter" size={22} /></Cell>
          <Cell $w={30} aria-label="新建组过滤器"><Icon name="folder" size={20} /></Cell>
          <ToolRule />
          <Cell $w={26} aria-label="图层状态管理器"><Icon name="layState" size={22} /></Cell>
          <Spacer $w={63} />
          {['layNew', 'layVp', 'layDel', 'laySet'].map((n) => <Cell key={n} $w={28} aria-label={n}><Icon name={n} size={21} /></Cell>)}
          <Spacer />
          <Cell $w={28} aria-label="刷新"><Icon name="refresh" size={22} /></Cell>
          <Cell $w={28} aria-label="切换替代亮显"><Icon name="override" size={22} /></Cell>
          <Cell $w={28} aria-label="设置"><Icon name="gear" size={20} /></Cell>
          <Spacer $w={12} />
        </ToolRow>
        <Split>
          <Filters>
            <FilterHead $line>过滤器<Icon name="chevrons" size={16} /></FilterHead>
            <Tree>
              <TreeRow><Expander aria-label="折叠" /><Branch $w={8} /><Icon name="laySet" size={18} /><Picked>全部</Picked></TreeRow>
              <TreeRow $in={30}><Branch $w={13} $h={12} /><Icon name="folderFilter" size={18} /><TreeName>所有使用的图层</TreeName></TreeRow>
            </Tree>
            <ScrollTrack $inner><ScrollThumb $w={82} /></ScrollTrack>
            <FilterHead>
              <Invert><Tickbox type="checkbox" />反转过滤器(</Invert>
              <Icon name="chevrons" size={16} />
            </FilterHead>
          </Filters>
          <TableSide>
            <LayerTable>
              <thead>
                <tr>
                  {COLS.map(([name, w]) => (
                    <Th key={name} $w={w} $split={name === '名称'}>
                      <Inline>{name}{name === '名称' && <SortMark />}</Inline>
                    </Th>
                  ))}
                </tr>
              </thead>
              <tbody>
                {LAYERS.map((name) => (
                  <Tr key={name} $on={picked === name} onClick={() => setPicked(name)}>
                    <Td><Icon name={name === 'ITZ1' ? 'tick' : 'sheetRow'} size={16} /></Td>
                    <Td $split>{name}</Td>
                    <Td $pad={1}><Icon name="bulb" size={18} /></Td>
                    <Td $pad={2}><Icon name="sun" size={17} /></Td>
                    <Td $pad={2}><Icon name="lock" size={17} /></Td>
                    <Td $pad={2}><Icon name="print" size={17} /></Td>
                    <Td $pad={2}><Inline $g={5}><Swatch $s={16} />白</Inline></Td>
                    <Td>Continu...</Td>
                    <Td $pad={1}><Inline $g={6}><LineSample $w={28} />默认</Inline></Td>
                  </Tr>
                ))}
              </tbody>
            </LayerTable>
            <TableFill />
            <ScrollTrack><ScrollThumb $w={190} /></ScrollTrack>
          </TableSide>
        </Split>
        <PaletteFoot>全部: 显示了 4 个图层，共 4 个图层</PaletteFoot>
      </PaletteMain>
    </Palette>
  )
}

/* ---------- drawing ---------- */

// drawing units per screen pixel
const UX = 1568 / 1184;
const UY = 1568 / 746;
const GAP = 4;

const CELLS = [
  '134,91 220,199 172,391 68,380 25,270 27,207',
  '243,111 376,110 402,168 405,282 275,382 234,338',
  '645,98 664,113 661,389 585,407 537,359 516,196',
  '954,54 1046,45 1089,105 1010,354 977,350 905,211',
  '1201,44 1363,44 1372,70 1349,258 1234,283 1193,216',
  '1424,171 1540,229 1541,415 1461,484 1432,477 1369,251',
  '469,254 509,277 506,553 426,570 373,510 364,346',
  '803,233 853,279 808,548 758,549 688,452 714,269',
  '1075,205 1187,248 1200,424 1185,465 1068,499 1014,400',
  '930,312 1033,479 992,602 894,617 857,576 857,368',
  '1348,283 1404,471 1299,588 1218,503 1216,363 1238,312',
  '80,405 186,418 197,433 152,701 60,669 26,526',
  '217,417 301,405 368,545 358,628 226,702 181,635',
  '578,433 639,418 718,530 691,697 604,734 525,548',
  '1177,494 1231,567 1239,702 1116,799 1064,740 1061,557',
  '1413,493 1538,619 1541,661 1500,775 1366,756 1354,559',
  '418,595 516,575 578,723 567,803 475,882 378,743',
  '726,588 832,570 885,672 815,870 786,876 696,774',
  '941,635 996,627 1076,824 1053,893 962,943 882,828',
  '88,705 193,740 220,808 187,977 43,950 25,812',
  '291,695 412,830 411,876 374,979 236,954 236,743',
  '645,751 745,863 736,991 603,1050 549,883 559,847',
  '1293,687 1346,814 1302,959 1208,974 1165,921 1146,803',
  '1398,785 1496,799 1539,959 1490,1070 1349,998 1342,888',
  '467,908 556,970 568,1137 485,1227 398,1166 396,976',
  '852,856 873,857 944,955 869,1174 790,1144 756,983',
  '1025,936 1118,1054 1089,1214 946,1203 921,1129 958,972',
  '1292,986 1326,1083 1276,1247 1193,1258 1126,1103 1147,1010',
  '87,985 181,1018 204,1062 174,1264 25,1211 25,1060',
  '258,983 363,1001 380,1032 382,1214 234,1251 203,1181',
  '734,1018 780,1178 720,1301 651,1305 582,1182 589,1082',
  '1360,1030 1494,1098 1502,1213 1470,1296 1331,1282 1307,1216',
  '803,1175 947,1232 959,1309 871,1467 845,1468 761,1266',
  '1025,1236 1105,1282 1132,1418 1089,1531 980,1531 933,1398',
  '88,1280 127,1275 216,1396 199,1531 38,1531 25,1372',
  '278,1264 361,1255 426,1439 391,1531 264,1531 228,1372',
  '453,1252 571,1252 598,1303 574,1507 469,1532 438,1499',
  '610,1330 769,1337 779,1499 768,1531 610,1531 593,1483',
  '1232,1280 1321,1348 1333,1500 1321,1531 1157,1531 1146,1374',
  '1374,1311 1516,1325 1539,1472 1522,1531 1361,1531 1342,1405',
].map((line) => line.split(' ').map((p) => {
  const [x, y] = p.split(',').map(Number);
  return [x / UX, y / UY];
}))

// moves every edge of a clockwise polygon inwards and joins the new edges
const inset = (pts, d) => {
  const edges = pts.map(([x1, y1], i) => {
    const [x2, y2] = pts[(i + 1) % pts.length];
    const len = Math.hypot(x2 - x1, y2 - y1);
    const dx = (x2 - x1) / len;
    const dy = (y2 - y1) / len;
    return { x: x1 - dy * d, y: y1 + dx * d, dx, dy };
  })
  return edges.map((b, i) => {
    const a = edges[(i + edges.length - 1) % edges.length];
    const det = a.dx * b.dy - a.dy * b.dx;
    const t = ((b.x - a.x) * b.dy - (b.y - a.y) * b.dx) / det;
    return [a.x + a.dx * t, a.y + a.dy * t];
  })
}
const toPoints = (pts) => pts.map(([x, y]) => `${x.toFixed(1)},${y.toFixed(1)}`).join(' ')

const Viewport = styled.main`
  flex: 1;
  min-height: 0;
  position: relative;
  overflow: hidden;
  background: #212830;
`
const ViewLabel = styled.span`
  position: absolute;
  left: 5px;
  top: 3px;
  color: #05070a;
`
const Drawing = styled.svg`
  position: absolute;
  left: 690px;
  top: 3px;
`
const Ucs = styled.svg`
  position: absolute;
  left: 40px;
  bottom: 44px;
`

const Ring = () => (
  <g fill="none">
    <ellipse cx="0" cy="0" rx="39" ry="39" stroke="#1f95e8" strokeWidth="2.6" />
    <ellipse cx="-1" cy="-1" rx="41" ry="37" stroke="#27b4d8" strokeWidth="2" transform="rotate(35)" opacity=".8" />
    <ellipse cx="1" cy="1" rx="43" ry="38" stroke="#1c8ba6" strokeWidth="3" transform="rotate(75)" opacity=".7" />
    <path d="M-42 6c2-22 12-40 30-46s34 0 40 14c8 12 18 22 12 38" stroke="#1f9dc8" strokeWidth="2" opacity=".8" />
    <path d="M-30 26C-20 38 10 46 30 22" stroke="#1f9dff" strokeWidth="2.4" />
    <path d="M-38 20c4 12 20 16 30 22 14 2 28-8 36-22" stroke="#1c8ba6" strokeWidth="3" opacity=".8" />
    <path d="M-28 2c-3 8 2 14-4 20" stroke="#1c8ba6" strokeWidth="3" opacity=".6" />
  </g>
)
const Fish = () => (
  <g>
    <path d="M-28-22L0-19-9-8z" fill="#8ed0f5" />
    <path d="M0-19L9 4-9-8z" fill="#6fb9ee" />
    <path d="M-28-22L-9-8-16 4z" fill="#a9def8" />
    <path d="M-16 4L-9-8 9 4z" fill="#5c9cd6" />
    <path d="M9 4l22 6-12 4z" fill="#8fe0ee" />
    <path d="M9 4l10 10 1 12z" fill="#86c1f3" />
    <path d="M31 10L20 26l-1-12z" fill="#4b86de" />
    <circle cx="-21" cy="-17" r="2.4" fill="#1b3c66" />
  </g>
)

const Polygons = () => (
  <Drawing width="1184" height="746" viewBox="0 0 1184 746">
    <g transform="translate(381 235)" opacity=".32"><Ring /><g transform="rotate(18) scale(.9)" opacity=".7"><Fish /></g></g>
    <g transform="translate(467 270) rotate(29)" fontFamily="Noto Sans CJK SC" opacity=".9">
      <text x="-31" y="32" fontSize="72" fontWeight="900" fill="#2c3138" stroke="#42474e" strokeWidth="2" letterSpacing="4">渊鱼科技</text>
      <text x="-23" y="62" fontSize="27" fontWeight="700" fill="#2c3138" stroke="#4a4f56" strokeWidth="1.4" letterSpacing="6">AbyssFish Tech</text>
    </g>
    <g fill="none" stroke="#d4d6d8" shapeRendering="crispEdges">
      <rect x="7" y="9" width="1168" height="731" strokeWidth="1.5" />
      {CELLS.map((pts, i) => <polygon key={i} points={toPoints(pts)} />)}
      {CELLS.map((pts, i) => <polygon key={i} points={toPoints(inset(pts, GAP))} />)}
    </g>
    <g transform="translate(1064 653)"><Ring /><Fish /></g>
    <text x="1000" y="719" fontSize="22" fontStyle="italic" fontFamily="Liberation Serif, serif" fill="#62a8dc" letterSpacing="4">AbyssFish</text>
  </Drawing>
)

const UcsIcon = () => (
  <Ucs width="100" height="90" viewBox="0 0 100 90" fontFamily="Lato, sans-serif" fontWeight="300" fontSize="24">
    <path d="M9 82V20l4-4 3 4v62z" fill="#57b457" />
    <path d="M14 76h62l3 4-3 4H14z" fill="#c45c5c" />
    <circle cx="12" cy="80" r="4" fill="#4a86d8" />
    <text x="9" y="12" fill="#1c9a1c">Y</text>
    <text x="70" y="77" fill="#c22f2f">X</text>
    <text x="9" y="77" fill="#1d62e0">Z</text>
  </Ucs>
)

/* ---------- view cube, navigation bar ---------- */

const ChildButtons = styled.div`
  position: absolute;
  top: 10px;
  right: 9px;
  display: flex;
  gap: 12px;
`
const Cube = styled.div`
  position: absolute;
  top: 47px;
  right: 17px;
  width: 144px;
  height: 152px;
`
const Wcs = styled.button`
  position: absolute;
  top: 216px;
  right: 59px;
  width: 59px;
  height: 21px;
  display: flex;
  align-items: center;
  justify-content: space-between;
  padding: 0 6px 0 5px;
  background: #9397a4;
  border-radius: 5px;
  font: 15px "Liberation Sans", sans-serif;
  color: #646975;
`
const NavBar = styled.div`
  position: absolute;
  top: 268px;
  right: 1px;
  width: 42px;
  height: 271px;
  border-radius: 4px;
  background: #5a5e61;
  border: 1px solid #6a6e70;
`

const ViewCube = () => (
  <Cube>
    <svg width="144" height="152" viewBox="0 -3 144 152" fontFamily="Noto Sans CJK SC" fontSize="20" fill="#b2b4b6" textAnchor="middle">
      <circle cx="72" cy="70" r="60" fill="none" stroke="#9ba0a5" strokeOpacity=".3" strokeWidth="13" />
      <rect x="43" y="41" width="58" height="58" fill="#adb0b2" />
      <rect x="54" y="52" width="36" height="36" fill="#9fa5ae" />
      <text x="72" y="82" fontSize="34" fontWeight="300" fill="#4c555c">上</text>
      <text x="72" y="17">北</text>
      <text x="72" y="141">南</text>
      <text x="10" y="78">西</text>
      <text x="134" y="78">东</text>
    </svg>
  </Cube>
)

const Navigation = () => (
  <NavBar>
    <svg width="40" height="269" viewBox="0 0 40 269" fill="none" stroke="#43484d" strokeWidth="1.6">
      <circle cx="33" cy="6" r="4" />
      <path d="M31 4l4 4M35 4l-4 4" strokeWidth="1" />
      <path d="M20 23h14v14a14 14 0 1 1-14-14z" fill="#555a60" />
      <circle cx="20" cy="37" r="7" />
      <path d="M17 62h6l-3 4z" fill="#3a3f44" stroke="none" />
      <g transform="translate(0 5)" fill="#555a60">
        <path d="M13 98c-3-5-6-9-8-13 3-2 5 1 8 4l-2-13c2-2 4 0 5 9l1-11c2-2 4-1 4 11l3-10c3-1 4 1 2 11l4-8c3 0 3 3 0 13l-5 7z" />
      </g>
      <g transform="translate(0 9)">
        <path d="M6 106l20 18M26 104L6 124M6 111v-5h5M21 104h5v5M6 119v5h5" />
        <circle cx="27" cy="124" r="6" fill="#555a60" />
        <path d="M31 129l6 6" strokeWidth="3" />
      </g>
      <path d="M17 152h6l-3 4z" fill="#3a3f44" stroke="none" />
      <g transform="translate(0 13)">
        <path d="M20 150l-5 7h3v18h5v-18h3z" />
        <ellipse cx="20" cy="166" rx="14" ry="5" />
        <path d="M5 169l6-3v7z" fill="#3a3f44" />
      </g>
      <path d="M17 201h6l-3 4z" fill="#3a3f44" stroke="none" />
      <g transform="translate(0 15)">
        <path d="M5 202h8v8H5zM16 202h8v8h-8zM27 202h8v8h-8zM5 213h21v17H5z" />
        <path d="M12 217l8 4-8 5z" fill="#3a3f44" />
      </g>
      <circle cx="33" cy="262" r="4" />
      <path d="M31 262h4" strokeWidth="1" />
    </svg>
  </NavBar>
)

/* ---------- command line ---------- */

const CommandBar = styled.div`
  position: absolute;
  left: 20%;
  right: 20%;
  bottom: 0;
  height: 34px;
  display: flex;
  align-items: center;
  background: #2b313c;
  border-radius: 4px;
`
const Grip = styled.span`
  width: 8px;
  height: 24px;
  margin: 0 7px 0 4px;
  background: radial-gradient(circle, #b9bdc2 1px, transparent 1px) 0 0 / 4px 4px;
`
const CommandField = styled.label`
  flex: 1;
  height: 34px;
  display: flex;
  align-items: center;
  gap: 4px;
  padding: 0 6px;
  background: #bcbdbf;
  border-radius: 2px;
`
const CommandInput = styled.input`
  flex: 1;
  margin-left: 7px;
  outline: none;
  font-style: italic;
  color: #333;
  &::placeholder { color: #6b6d70; }
`
const Up = styled.span`
  border: solid transparent;
  border-width: 0 5px 5px;
  border-bottom-color: #555;
`

const CommandLine = () => (
  <CommandBar>
    <Grip />
    <Cell $w={14} aria-label="关闭"><Icon name="x" size={14} /></Cell>
    <Spacer $w={12} />
    <Cell $w={30} aria-label="自定义"><Icon name="wrench" size={20} /></Cell>
    <CommandField>
      <Icon name="terminal" size={20} />
      <Caret $big $dark />
      <CommandInput aria-label="命令" placeholder="键入命令" />
      <Up />
    </CommandField>
  </CommandBar>
)

/* ---------- status bar ---------- */

const StatusBar = styled.footer`
  flex: none;
  height: 34px;
  display: flex;
  position: relative;
`
const StatusGroup = styled.div`
  margin-left: auto;
  padding-top: 2px;
  display: flex;
  white-space: nowrap;
`
const StatusCell = styled.button`
  flex: none;
  width: ${({ $w }) => $w}px;
  height: 32px;
  display: flex;
  align-items: center;
  justify-content: ${({ $align }) => $align || 'center'};
  padding: 0 ${({ $align }) => ($align ? 7 : 0)}px;
  margin-right: ${({ $gap }) => $gap || 0}px;
  font-size: 15px;
  font-weight: ${({ $bold }) => ($bold ? 700 : 400)};
  background: ${({ $on }) => ($on ? '#5f8fc2' : P)};
  border-right: ${({ $line }) => ($line ? '1px solid #2a313b' : 0)};
`
const ScaleCell = styled(StatusCell)`
  gap: 7px;
`
const UnitSelect = styled.select`
  flex: none;
  width: 78px;
  height: 32px;
  padding-left: 6px;
  appearance: none;
  outline: none;
  background: ${P};
`
const Assist = styled.button`
  position: absolute;
  right: 0;
  bottom: 0;
  width: 58px;
  height: 63px;
  display: flex;
  align-items: flex-start;
  justify-content: center;
  padding-top: 7px;
  background: linear-gradient(#0b0d10 50%, transparent);
  border-radius: 24px 0 0 24px;
`

const TOGGLES = [
  ['grid', 32], ['snap', 30], ['', 22, { gap: 3 }],
  ['infer', 32, { line: 1 }], ['dyn', 32, { line: 1 }], ['ortho', 32, { line: 1 }],
  ['polar', 31, { on: 1 }], ['', 22], ['iso', 30], ['', 22, { line: 1 }],
  ['otrack', 32], ['osnap', 30], ['', 22, { line: 1 }],
  ['lweight', 33, { line: 1 }], ['transp', 32, { line: 1 }], ['cycling', 32, { line: 1 }],
  ['snap3d', 32], ['', 22, { gap: 2 }],
  ['ucs', 32], ['filter3d', 30], ['', 22], ['gizmo', 30, { on: 1 }], ['', 22, { gap: 3 }],
  ['annVis', 30, { on: 1 }], ['annAuto', 31], ['ann', 31],
]
const TOOLS = [['gear', 32], ['', 22, { line: 1 }], ['plus', 31, { gap: 3 }], ['ruler', 32]]
const TAIL = [
  ['qprops', 33, { gap: 2 }], ['lockUi', 32], ['', 20, { line: 1 }], ['isolate', 33, { gap: 3 }],
  ['clean', 30, { on: 1, gap: 4 }], ['monitor', 34], ['menu', 38],
]

const Toggles = ({ items }) => items.map(([icon, w, o = {}], i) => (
  <StatusCell key={i} $w={w} $gap={o.gap} $on={o.on} $line={o.line} aria-label={icon || '列表'}>
    {icon ? <Icon name={icon} size={21} /> : <Caret $big />}
  </StatusCell>
))

const Status = () => (
  <StatusBar>
    <TabStrip $h={34}>
      <MenuButton $r={14} aria-label="布局菜单"><Icon name="menu" size={20} /></MenuButton>
      <ActiveTab $top>模型</ActiveTab>
      <SheetTab $l={10} $r={15}>布局1</SheetTab>
      <Slash />
      <SheetTab $l={15} $r={15}>布局2</SheetTab>
      <Slash />
      <Cell $w={54} aria-label="新建布局"><Icon name="plus" size={20} /></Cell>
      <Slash />
    </TabStrip>
    <StatusGroup>
      <StatusCell $w={235} $gap={3} $align="flex-end">664.5751, -518.3706, 0.0000</StatusCell>
      <StatusCell $w={36} $gap={2} $bold>模型</StatusCell>
      <Toggles items={TOGGLES} />
      <ScaleCell $w={98} $gap={1} $align="flex-start">1:1 / 100%<Caret $big /></ScaleCell>
      <Toggles items={TOOLS} />
      <UnitSelect aria-label="图形单位"><option>小数</option></UnitSelect>
      <StatusCell $w={17} $line aria-label="单位列表"><Caret $big /></StatusCell>
      <Toggles items={TAIL} />
    </StatusGroup>
    <Assist aria-label="助手">
      <svg width="46" height="48" viewBox="0 0 46 48">
        <ellipse cx="23" cy="24" rx="23" ry="24" fill="#fff" />
        <path d="M13 15h24L26 36l2-14-4 4 1-4-3 1 5-4H16z" fill="#18c06a" />
        <path d="M11 22h12l-4 3h-5zM19 27l5-3-4 8z" fill="#18c06a" />
      </svg>
    </Assist>
  </StatusBar>
)

export default function App() {
  return (
    <Shell>
      <GlobalStyle />
      <Title />
      <Ribbon />
      <TabStrip $h={34}>
        <MenuButton $r={18} aria-label="文件菜单"><Icon name="menu" size={22} /></MenuButton>
        <Slash />
        <SheetTab $l={14} $r={9}>开始</SheetTab>
        <ActiveTab>
          渊鱼科技*
          <button aria-label="关闭"><Icon name="x" size={14} /></button>
        </ActiveTab>
        <Cell $w={46} aria-label="新建图形"><Icon name="plus" size={20} /></Cell>
        <Slash />
      </TabStrip>
      <StripEdge />
      <Viewport>
        <Polygons />
        <ViewLabel>[−][俯视][灰度]</ViewLabel>
        <ChildButtons>
          <button aria-label="最小化"><Icon name="childMin" size={14} /></button>
          <button aria-label="还原"><Icon name="childRestore" size={14} /></button>
          <button aria-label="关闭"><Icon name="childClose" size={14} /></button>
        </ChildButtons>
        <ViewCube />
        <Wcs>WCS<Caret $big /></Wcs>
        <Navigation />
        <LayerPalette />
        <UcsIcon />
        <CommandLine />
      </Viewport>
      <StripEdge />
      <Status />
    </Shell>
  )
}
